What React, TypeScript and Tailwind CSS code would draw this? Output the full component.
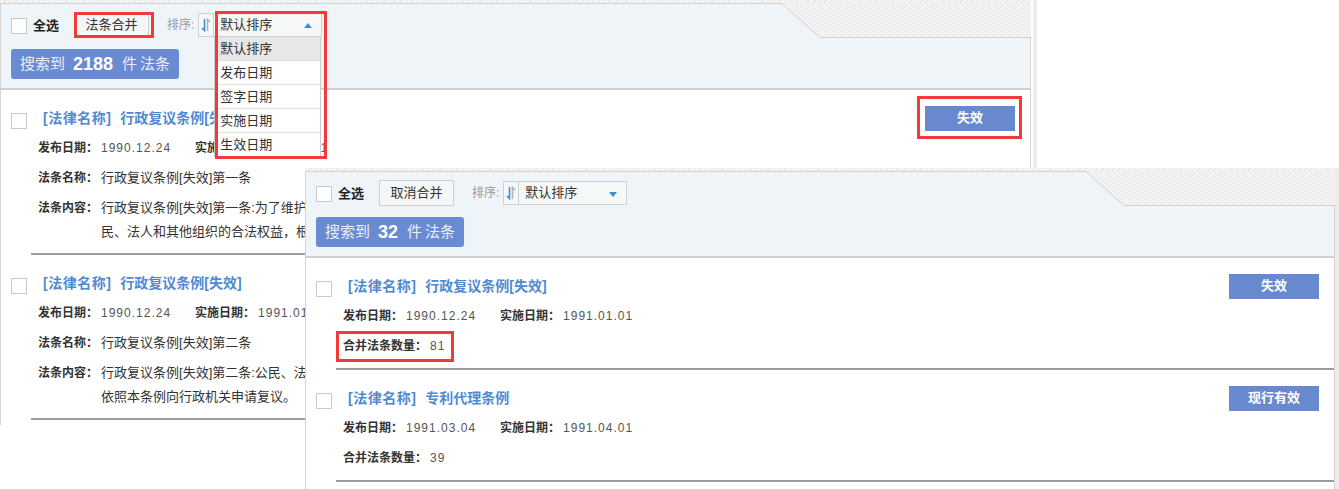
import React from 'react';

const hatch =
  'bg-[repeating-linear-gradient(135deg,#e6e6e6_0px,#e6e6e6_1px,#f4f4f4_1px,#f4f4f4_4px)]';

function Checkbox() {
  return <span className="block w-4 h-4 bg-white border border-[#c9c9c9]" />;
}

function SortIcon() {
  return (
    <svg width="10" height="14" viewBox="0 0 10 14">
      <path d="M3.5 1V12.5L1 10" stroke="#3d8fd8" strokeWidth="1.6" fill="none" />
      <path d="M6.5 13V1.5L9 4" stroke="#b3b3b3" strokeWidth="1.6" fill="none" />
    </svg>
  );
}

function Corner({ id }: { id: string }) {
  return (
    <svg width="250" height="36" className="absolute top-[-1px] right-[-1px]">
      <defs>
        <pattern id={id} width="4" height="4" patternUnits="userSpaceOnUse">
          <rect width="4" height="4" fill="#f4f4f4" />
          <path d="M0 4L4 0" stroke="#e6e6e6" strokeWidth="1" />
        </pattern>
      </defs>
      <polygon points="1,0 250,0 250,34 39,34" fill={`url(#${id})`} />
      <polyline points="0,0.5 1,0.5 39,34.5 249.5,34.5 249.5,36" fill="none" stroke="#d0d0d0" />
    </svg>
  );
}

const sortOptions = ['默认排序', '发布日期', '签字日期', '实施日期', '生效日期'];

function Header({ button, count, open, id }: { button: string; count: string; open?: boolean; id: string }) {
  return (
    <div className="relative h-[87px] flex flex-col items-start bg-[#eff4f8] border-t border-[#d3d3d3] border-b-2 border-b-[#d0d0d0] pt-[8px] pl-[10px]">
      <div className="flex items-center h-[26px]">
        <span className="mt-[2px]">
          <Checkbox />
        </span>
        <span className="ml-[6px] mt-[1px] text-[13px] font-semibold text-[#222]">全选</span>
        <button className="ml-[15px] w-[75px] h-[26px] border border-[#cfcfcf] bg-[#f4f6f7] text-[13px] text-[#333]">
          {button}
        </button>
        <span className="ml-[18px] text-[12px] text-[#999]">排序:</span>
        <div className="ml-[4px] flex h-[24px] border border-[#cdd1d4] bg-[#f6f7f7]">
          <span className="w-[15px] flex items-center justify-center border-r border-[#cdd1d4]">
            <SortIcon />
          </span>
          <div className="relative w-[107px] flex items-center pl-[6px] text-[13px] text-[#333]">
            默认排序
            {open ? (
              <span className="absolute right-[9px] top-[9px] w-0 h-0 border-x-[4px] border-x-transparent border-b-[5px] border-b-[#3a8fd9]" />
            ) : (
              <span className="absolute right-[9px] top-[10px] w-0 h-0 border-x-[4px] border-x-transparent border-t-[5px] border-t-[#3a8fd9]" />
            )}
            {open && (
              <ul className="absolute left-0 top-[23px] z-20 w-[107px] bg-white border-x border-[#cccccc]">
                {sortOptions.map((o, i) => (
                  <li
                    key={o}
                    className={`h-[24px] flex items-center pl-[5px] text-[13px] text-[#333] border-b border-[#e3e3e3] ${
                      i === 0 ? 'bg-[#e7e7e7]' : 'bg-white'
                    }`}
                  >
                    {o}
                  </li>
                ))}
              </ul>
            )}
          </div>
        </div>
      </div>
      <div className="mt-[11px] flex items-center h-[30px] px-[9px] rounded-[3px] bg-[#6a8bd1] text-[#e9eefa]">
        <span className="text-[15px]">搜索到</span>
        <span className="ml-[8px] mr-[9px] text-[18px] font-bold text-white">{count}</span>
        <span className="text-[15px]">件</span>
        <span className="ml-[3px] text-[15px]">法条</span>
      </div>
      <Corner id={id} />
    </div>
  );
}

function Label({ children, className = '' }: { children: React.ReactNode; className?: string }) {
  return <span className={`text-[12px] font-bold text-[#333] ${className}`}>{children}</span>;
}

function Num({ children }: { children: React.ReactNode }) {
  return <span className="ml-[3px] text-[12px] tracking-[1px] text-[#555]">{children}</span>;
}

function Dates({ pub, eff }: { pub: string; eff: string }) {
  return (
    <div className="flex items-center h-[30px] whitespace-nowrap">
      <Label>发布日期：</Label>
      <Num>{pub}</Num>
      <Label className="ml-[24px]">实施日期：</Label>
      <Num>{eff}</Num>
    </div>
  );
}

function Item({
  title,
  status,
  children,
  pb,
}: {
  title: string;
  status: string;
  children: React.ReactNode;
  pb: string;
}) {
  return (
    <div className="flex">
      <div className="w-[30px] shrink-0 pl-[10px] pt-[23px]">
        <Checkbox />
      </div>
      <div className={`flex-1 min-w-0 border-b-2 border-[#9c9c9c] pt-[15px] ${pb}`}>
        <div className="flex items-center justify-between h-[26px]">
          <span className="pl-[12px] text-[14px] font-bold text-[#4f8ad2] whitespace-nowrap">
            <span className="tracking-[0.5px]">[法律名称]</span>
            <span className="ml-[9px]">{title}</span>
          </span>
          <span className="mr-[15px] w-[90px] h-[25px] flex items-center justify-center bg-[#6888cf] text-white text-[13px] font-bold">
            {status}
          </span>
        </div>
        <div className="mt-[2px] pl-[7px]">{children}</div>
      </div>
    </div>
  );
}

function Article({ name, lines }: { name: string; lines: string[] }) {
  return (
    <>
      <div className="flex items-center h-[30px] whitespace-nowrap">
        <Label>法条名称：</Label>
        <span className="ml-[3px] text-[13px] text-[#333]">{name}</span>
      </div>
      <div className="mt-[3px] flex whitespace-nowrap">
        <Label className="leading-[24px]">法条内容：</Label>
        <div className="ml-[3px] text-[13px] leading-[24px] text-[#333]">
          {lines.map((l) => (
            <div key={l}>{l}</div>
          ))}
        </div>
      </div>
    </>
  );
}

function Count({ n }: { n: string }) {
  return (
    <div className="flex items-center h-[30px] whitespace-nowrap">
      <Label>合并法条数量：</Label>
      <Num>{n}</Num>
    </div>
  );
}

function RedBox({ className }: { className: string }) {
  return <div className={`absolute z-30 border-[3px] border-[#f23a3a] ${className}`} />;
}

export default function App() {
  return (
    <div className="relative w-[1339px] h-[489px] overflow-hidden bg-white font-['Liberation_Sans','Noto_Sans_CJK_SC',sans-serif]">
      {/* first window: single articles, partly covered by the second one */}
      <div className={`absolute left-0 top-0 w-[1031px] h-[425px] flex flex-col overflow-hidden ${hatch}`}>
        <div className="h-[3px] shrink-0" />
        <div className="flex-1 bg-white border-x border-[#d3d3d3]">
          <Header button="法条合并" count="2188" open id="hatch-a" />
          <Item title="行政复议条例[失效]" status="失效" pb="pb-[9px]">
            <Dates pub="1990.12.24" eff="1991.01.01" />
            <Article
              name="行政复议条例[失效]第一条"
              lines={['行政复议条例[失效]第一条:为了维护公', '民、法人和其他组织的合法权益，根']}
            />
          </Item>
          <Item title="行政复议条例[失效]" status="失效" pb="pb-[9px]">
            <Dates pub="1990.12.24" eff="1991.01.01" />
            <Article
              name="行政复议条例[失效]第二条"
              lines={['行政复议条例[失效]第二条:公民、法', '依照本条例向行政机关申请复议。']}
            />
          </Item>
        </div>
      </div>
      <div className="absolute left-[1033px] top-0 w-[4px] h-[425px] bg-[#ececec]" />

      {/* second window: merged articles */}
      <div className={`absolute left-[305px] top-[168px] z-10 w-[1030px] h-[321px] flex flex-col overflow-hidden ${hatch}`}>
        <div className="h-[3px] shrink-0" />
        <div className="flex-1 bg-white border-x border-[#d3d3d3]">
          <Header button="取消合并" count="32" id="hatch-b" />
          <Item title="行政复议条例[失效]" status="失效" pb="pb-[7px]">
            <Dates pub="1990.12.24" eff="1991.01.01" />
            <Count n="81" />
          </Item>
          <Item title="专利代理条例" status="现行有效" pb="pb-[7px]">
            <Dates pub="1991.03.04" eff="1991.04.01" />
            <Count n="39" />
          </Item>
        </div>
      </div>
      <div className="absolute left-[1335px] top-[168px] w-[4px] h-[321px] bg-[#ececec]" />

      <RedBox className="left-[74px] top-[12px] w-[80px] h-[26px]" />
      <RedBox className="left-[215px] top-[11px] w-[112px] h-[148px]" />
      <RedBox className="left-[917px] top-[96px] w-[105px] h-[43px]" />
      <RedBox className="left-[336px] top-[331px] w-[118px] h-[31px]" />
    </div>
  );
}
